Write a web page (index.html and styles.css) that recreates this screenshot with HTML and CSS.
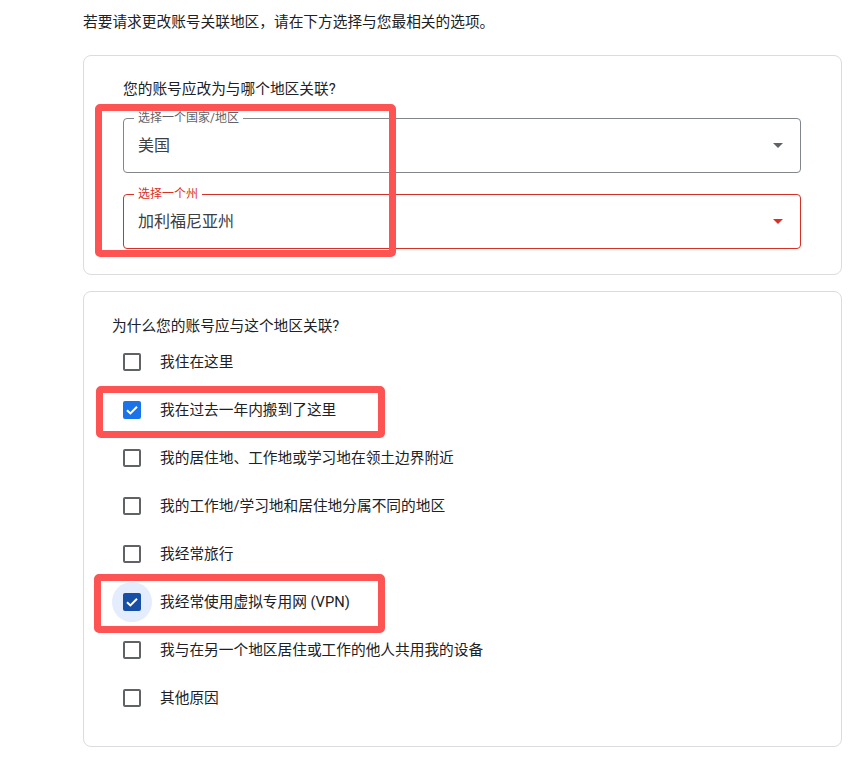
FILE: index.html
```html
<!DOCTYPE html>
<html lang="zh-CN">
<head>
<meta charset="utf-8">
<title>更改账号关联地区</title>
<link rel="stylesheet" href="styles.css">
</head>
<body>
<div class="page">
  <p class="intro">若要请求更改账号关联地区，请在下方选择与您最相关的选项。</p>

  <section class="card card-region">
    <h2 class="question question-region">您的账号应改为与哪个地区关联?</h2>
    <div class="fields">
      <div class="field">
        <span class="field-label">选择一个国家/地区</span>
        <span class="field-value">美国</span>
        <span class="arrow"></span>
      </div>
      <div class="field field-error">
        <span class="field-label">选择一个州</span>
        <span class="field-value">加利福尼亚州</span>
        <span class="arrow"></span>
      </div>
    </div>
  </section>

  <section class="card card-reasons">
    <h2 class="question">为什么您的账号应与这个地区关联?</h2>
    <ul class="options">
      <li class="option"><span class="cb-wrap"><span class="cb"></span></span><span class="option-label">我住在这里</span></li>
      <li class="option"><span class="cb-wrap"><span class="cb cb-checked"><svg viewBox="0 0 18 18" class="check"><path d="M4 9.2 L7.4 12.4 L14 5.8"/></svg></span></span><span class="option-label">我在过去一年内搬到了这里</span></li>
      <li class="option"><span class="cb-wrap"><span class="cb"></span></span><span class="option-label">我的居住地、工作地或学习地在领土边界附近</span></li>
      <li class="option"><span class="cb-wrap"><span class="cb"></span></span><span class="option-label">我的工作地/学习地和居住地分属不同的地区</span></li>
      <li class="option"><span class="cb-wrap"><span class="cb"></span></span><span class="option-label">我经常旅行</span></li>
      <li class="option"><span class="cb-wrap cb-focused"><span class="cb cb-checked cb-dark"><svg viewBox="0 0 18 18" class="check"><path d="M4 9.2 L7.4 12.4 L14 5.8"/></svg></span></span><span class="option-label">我经常使用虚拟专用网 (VPN)</span></li>
      <li class="option"><span class="cb-wrap"><span class="cb"></span></span><span class="option-label">我与在另一个地区居住或工作的他人共用我的设备</span></li>
      <li class="option"><span class="cb-wrap"><span class="cb"></span></span><span class="option-label">其他原因</span></li>
    </ul>
  </section>

  <div class="annot annot-fields"></div>
  <div class="annot annot-moved"></div>
  <div class="annot annot-vpn"></div>
</div>
</body>
</html>
```

FILE: styles.css
```css
* { box-sizing: border-box; }

body {
  margin: 0;
  background: #ffffff;
  color: #202124;
  font-family: Roboto, "Noto Sans CJK SC", sans-serif;
}

.page {
  position: relative;
  padding: 12px 20px 0 83px;
}

.intro {
  margin: 0;
  font-size: 14.7px;
  line-height: 20px;
}

.card {
  border: 1px solid #dadce0;
  border-radius: 8px;
}

.card-region {
  margin-top: 23px;
  padding: 23px 40px 25px 39px;
}

.card-reasons {
  margin-top: 16px;
  padding: 24px 40px 24px 28px;
}

.question {
  margin: 0;
  font-size: 14.7px;
  line-height: 20px;
  font-weight: 400;
  color: #202124;
}

.fields {
  margin-top: 19px;
  display: flex;
  flex-direction: column;
  gap: 21px;
}

.field {
  position: relative;
  height: 55px;
  border: 1px solid #80868b;
  border-radius: 4px;
  display: flex;
  align-items: center;
  padding: 0 17px 0 14px;
}

.field-error {
  border-color: #d93025;
}

.field-label {
  position: absolute;
  top: -9px;
  left: 10px;
  padding: 0 4px;
  background: #ffffff;
  font-size: 12px;
  line-height: 16px;
  color: #5f6368;
}

.field-error .field-label {
  color: #d93025;
}

.field-value {
  font-size: 16px;
  line-height: 24px;
  color: #3c4043;
}

.arrow {
  margin-left: auto;
  width: 0;
  height: 0;
  border-left: 5px solid transparent;
  border-right: 5px solid transparent;
  border-top: 5px solid #5f6368;
}

.field-error .arrow {
  border-top-color: #d93025;
}

.options {
  list-style: none;
  margin: 2px 0 0;
  padding: 0;
}

.option {
  height: 48px;
  display: flex;
  align-items: center;
  gap: 8px;
}

.cb-wrap {
  width: 40px;
  height: 40px;
  border-radius: 50%;
  display: flex;
  align-items: center;
  justify-content: center;
  flex-shrink: 0;
}

.cb-focused {
  background: #e3edfd;
}

.cb {
  width: 18px;
  height: 18px;
  border: 2px solid #5f6368;
  border-radius: 2px;
  display: flex;
  align-items: center;
  justify-content: center;
}

.cb-checked {
  border: none;
  background: #1a73e8;
}

.cb-dark {
  background: #174ea6;
}

.check {
  width: 18px;
  height: 18px;
}

.check path {
  fill: none;
  stroke: #ffffff;
  stroke-width: 2;
}

.option-label {
  font-size: 14.7px;
  line-height: 20px;
  color: #202124;
}

.annot {
  position: absolute;
  border: 7px solid #fd5353;
  border-radius: 5px;
  pointer-events: none;
}

.annot-fields {
  left: 95px;
  top: 104px;
  width: 301px;
  height: 153px;
}

.annot-moved {
  left: 96px;
  top: 386px;
  width: 289px;
  height: 52px;
}

.annot-vpn {
  left: 94px;
  top: 574px;
  width: 291px;
  height: 59px;
}
```
